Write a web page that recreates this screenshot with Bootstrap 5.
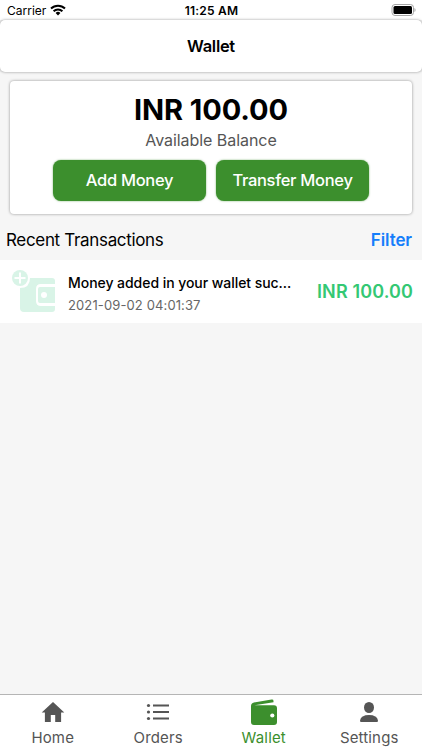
<!DOCTYPE html>
<html lang="en">
<head>
<meta charset="utf-8">
<meta name="viewport" content="width=device-width, initial-scale=1">
<title>Wallet</title>
<link rel="stylesheet" href="https://cdn.jsdelivr.net/npm/bootstrap@5.3.0/dist/css/bootstrap.min.css">
<style>
body{font-family:Inter,"Liberation Sans",sans-serif;color:#000;background:#f6f6f6;white-space:nowrap}
svg{display:block;flex:none}
.status-row{height:20px;font-size:12px;line-height:20px;padding:2px 6px 0 7px;background:#fff}
.status-row svg{margin-bottom:2px}
.status-row>div{flex:1 1 0}
.status-row .clock{font-weight:600;letter-spacing:.2px}
.title-bar{height:52px;font-size:16.5px;font-weight:600;letter-spacing:-.3px;border-radius:5px;box-shadow:0 0 3px rgba(0,0,0,.4);padding-top:1px}
.title-wrap{background:#f0f0f0}
.balance{margin:9px 10px 0;height:133px;border-radius:4px;box-shadow:0 0 3px rgba(0,0,0,.42);background:#fff}
.amount{font-size:29px;font-weight:700;line-height:36px;letter-spacing:-.1px;margin-top:11px}
.caption{font-size:16px;line-height:20px;color:#555;margin-top:2px;letter-spacing:-.05px}
.balance-actions{gap:10px;margin-top:10px}
.btn-wallet{width:153px;height:41px;border-radius:8px;background:#3c8f2d!important;color:#fff!important;border:0;font-size:16.5px;font-weight:500;letter-spacing:-.3px;padding:0;box-shadow:0 0 2px rgba(60,143,45,.7)}
.section-row{height:46px;padding:7px 10px 0 6px;font-size:17px}
.section-row span{letter-spacing:-.33px}
.filter-link{color:#157efb;font-weight:600;letter-spacing:-.1px}
.txn{height:63px;background:#fff;padding:0 9px 0 12px}
.txn-title{font-size:14px;font-weight:500;line-height:20px;letter-spacing:-.05px;padding-top:4px}
.txn-date{font-size:13px;line-height:20px;color:#666;letter-spacing:.12px;margin-top:2px}
.txn-sum{font-size:18px;font-weight:600;color:#34c874;letter-spacing:.12px}
.tabs{height:56px;background:#fff;border-top:1px solid #b5b5b5}
.tab-item{flex:1 1 0;color:#555;font-size:15px;line-height:20px;letter-spacing:.15px}
.tab-item svg{height:32px;margin-bottom:1px}
.tab-item.current{color:#3c8f2d}
</style>
<script src="https://cdn.jsdelivr.net/npm/bootstrap@5.3.0/dist/js/bootstrap.bundle.min.js"></script>
</head>
<body class="d-flex flex-column vh-100 overflow-hidden">
<div class="title-wrap">
<div class="status-row d-flex align-items-center">
  <div class="d-flex align-items-center"><span>Carrier</span>
    <svg class="ms-1" width="16" height="12" viewBox="0 0 16 12" fill="none" stroke="#000" stroke-width="2"><path d="M1 4.500a10 10 0 0 1 14 0M3.600 7.200a6.300 6.300 0 0 1 8.800 0"/><path d="M8 11.400 5.600 9a3.500 3.500 0 0 1 4.800 0z" fill="#000" stroke="none"/></svg>
  </div>
  <span class="clock">11:25 AM</span>
  <div class="d-flex justify-content-end"><svg width="25" height="12" viewBox="0 0 25 12"><rect x="1" y=".5" width="21.500" height="11" rx="3" fill="#fff" stroke="#a5a5a5"/><rect x="2.500" y="2" width="18.500" height="8" rx="1.500"/><path d="M23.500 4v4q1-.7 1-2t-1-2z" fill="#999"/></svg></div>
</div>
<header class="title-bar bg-white d-flex align-items-center justify-content-center position-relative"><span>Wallet</span></header>
</div>
<main class="flex-grow-1">
  <section class="balance d-flex flex-column align-items-center">
    <div class="amount">INR 100.00</div>
    <div class="caption">Available Balance</div>
    <div class="balance-actions d-flex"><button class="btn btn-wallet">Add Money</button><button class="btn btn-wallet">Transfer Money</button></div>
  </section>
  <div class="section-row d-flex align-items-center justify-content-between"><span>Recent Transactions</span><a class="filter-link text-decoration-none" href="#">Filter</a></div>
  <div class="txn d-flex align-items-center">
    <svg width="44" height="44" viewBox="0 0 44 44"><path fill="#d9f4e7" d="M18 8h22q3 0 3 3v3H29q-5 0-5 5v12q0 5 5 5h14v3q0 3-3 3H12q-4 0-4-4V18q10 0 10-10z"/><path fill="#d9f4e7" fill-rule="evenodd" d="M28 17h15v16H28q-2 0-2-2V19q0-2 2-2zm4 5a3 3 0 1 0 0 6 3 3 0 0 0 0-6z"/><circle cx="8" cy="8" r="8" fill="#d9f4e7"/><path d="M8 2.500v11M2.500 8h11" stroke="#fff" stroke-width="2"/></svg>
    <div class="ms-2 ps-1"><div class="txn-title">Money added in your wallet suc...</div><div class="txn-date">2021-09-02 04:01:37</div></div>
    <div class="txn-sum ms-auto">INR 100.00</div>
  </div>
</main>
<nav class="tabs d-flex">
  <div class="tab-item d-flex flex-column align-items-center"><svg width="26" height="32" viewBox="0 0 26 32" fill="currentColor"><path d="M13 7 1.700 17.400h3.200V27h5.900v-7h4.400v7h5.900v-9.600h3.200z"/></svg>Home</div>
  <div class="tab-item d-flex flex-column align-items-center"><svg width="26" height="32" viewBox="0 0 26 32" fill="none" stroke="currentColor" stroke-width="2"><path d="M8 10.500h16M8 17h16M8 23.500h16"/><g fill="currentColor" stroke="none"><circle cx="3.500" cy="10.500" r="1.600"/><circle cx="3.500" cy="17" r="1.600"/><circle cx="3.500" cy="23.500" r="1.600"/></g></svg>Orders</div>
  <div class="tab-item current d-flex flex-column align-items-center"><svg width="26" height="32" viewBox="0 0 26 32" fill="currentColor"><path d="M0 11q0-3 3-3.600L20.500 4.600q2-.3 2 1.400v1.300L3.500 10.200H23q3 0 3 3V27q0 3-3 3H3q-3 0-3-3z"/><circle cx="21.300" cy="20.500" r="2.100" fill="#fff"/></svg>Wallet</div>
  <div class="tab-item d-flex flex-column align-items-center"><svg width="26" height="32" viewBox="0 0 26 32" fill="currentColor"><ellipse cx="13" cy="12.500" rx="5" ry="5.500"/><path d="M4 25.500q1-5.500 9-5.500t9 5.500q0 1.500-1 1.500H5q-1 0-1-1.500z"/></svg>Settings</div>
</nav>
</body>
</html>
